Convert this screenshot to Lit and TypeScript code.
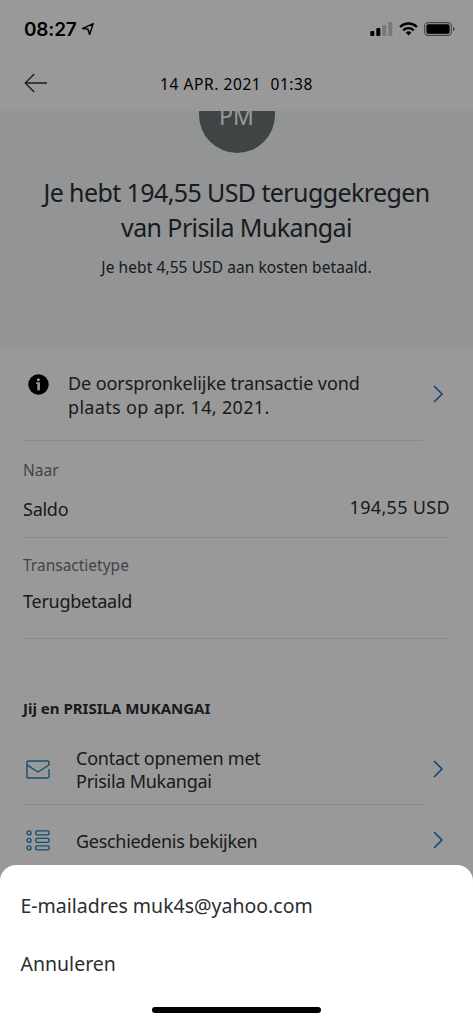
import { LitElement, html, css, svg } from "lit";
import { customElement } from "lit/decorators.js";

const chevron = html`<svg class="chevron" width="12" height="18" viewBox="0 0 12 18">
  <path d="M2 1 L10 9 L2 17" fill="none" stroke="#1b6fc4" stroke-width="1.5" />
</svg>`;

const listRow = (y: number) => svg`
  <circle cx="3" cy=${y} r="2" />
  <rect x="9.7" y=${y - 2} width="13.4" height="4" rx="1.3" />`;

@customElement("app-root")
export class AppRoot extends LitElement {
  static styles = css`
    :host {
      display: block;
      position: relative;
      width: 473px;
      height: 1024px;
      overflow: hidden;
      background: #fff;
      color: #2c2e2f;
      font-family: "Noto Sans", "Open Sans", sans-serif;
      white-space: nowrap;
    }
    * { box-sizing: border-box; }
    svg { display: block; flex: none; }
    .status {
      height: 58px;
      padding: 0 18px 0 24px;
      display: flex;
      align-items: center;
      color: #000;
    }
    .clock {
      font: 600 19px/24px Inter, sans-serif;
      letter-spacing: -0.2px;
      width: 57px;
      padding-top: 1px;
    }
    .signals { margin-left: auto; display: flex; align-items: center; gap: 6px; }
    .nav {
      height: 53px;
      display: grid;
      grid-template-columns: 1fr auto 1fr;
      align-items: center;
      padding: 0 24px 3px;
      color: #000;
    }
    .date {
      font-size: 15.5px;
      line-height: 20px;
      letter-spacing: 0.57px;
      white-space: pre;
      padding-top: 2px;
    }
    .hero {
      height: 236px;
      background: #f4f7fa;
      display: flex;
      flex-direction: column;
      align-items: center;
      overflow: hidden;
      text-align: center;
    }
    .avatar {
      width: 76px;
      height: 76px;
      margin-top: -34px;
      flex: none;
      border-radius: 50%;
      background: #697273;
      color: #fff;
      font-size: 23px;
      line-height: 78px;
    }
    h1 {
      margin: 22px 0 0;
      font-weight: 400;
      font-size: 25px;
      line-height: 35px;
      letter-spacing: -0.6px;
    }
    .fee { margin: 11px 0 0; font-size: 15.5px; line-height: 22px; letter-spacing: 0.08px; }
    .notice {
      height: 93px;
      margin-left: 23px;
      padding-right: 29px;
      display: flex;
      align-items: center;
    }
    .notice .text { letter-spacing: -0.08px; padding-top: 4px; }
    .notice .text .when { letter-spacing: 0.33px; }
    .line { height: 1px; margin: 0 23px; background: #e6e6e8; }
    .line.short { margin-right: 50px; }
    .body { font-size: 18px; line-height: 23.5px; letter-spacing: -0.25px; }
    .notice .icon { width: 45px; padding-left: 4.5px; align-self: flex-start; padding-top: 27px; }
    .chevron { margin-left: auto; }
    .field { padding: 0 23px; display: flex; flex-direction: column; }
    .to { height: 96px; padding-top: 18px; gap: 17px; }
    .type { height: 100px; padding-top: 16px; gap: 14px; }
    .label { font-size: 15.5px; line-height: 22px; color: #6c7378; }
    .pair { display: flex; justify-content: space-between; }
    .amount { line-height: 18.5px; letter-spacing: 0.33px; }
    h2 { margin: 58px 23px 0; font-size: 15px; line-height: 22px; font-weight: 700; }
    .action {
      padding: 0 29px 0 26px;
      display: flex;
      align-items: center;
    }
    .action .icon { width: 50px; }
    .contact { height: 85px; padding-top: 15px; }
    .contact .text { padding-top: 2px; }
    .history { height: 70px; }
    .history .text { letter-spacing: -0.3px; padding-top: 3px; }
    .scrim { position: absolute; inset: 0; background: rgba(0, 0, 0, 0.4); }
    .sheet {
      position: absolute;
      left: 0;
      right: 0;
      bottom: 0;
      height: 159px;
      border-radius: 16px 16px 0 0;
      background: #fff;
      padding: 12px 20.5px 0;
      font-size: 19.5px;
      line-height: 58px;
      display: flex;
      flex-direction: column;
    }
    .home {
      width: 169px;
      height: 6px;
      margin: 14px auto 0;
      border-radius: 3px;
      background: #000;
    }
  `;

  render() {
    return html`
      <div class="status">
        <span class="clock">08:27</span>
        <svg width="14" height="14" viewBox="0 0 14 14">
          <path d="M1.6 6.6 L12.2 1.6 L8.6 12.4 L6.8 7 Z" fill="none" stroke="#000" stroke-width="1.5" stroke-linejoin="round" />
        </svg>
        <div class="signals">
          <svg width="23" height="14" viewBox="0 0 23 14">
            <rect x="0.3" y="9" width="4" height="5" rx="1" />
            <rect x="6.3" y="6" width="4" height="8" rx="1" />
            <rect x="12.3" y="3" width="4" height="11" rx="1" fill="#c8c8c8" />
            <rect x="18.3" y="0" width="4" height="14" rx="1" fill="#c8c8c8" />
          </svg>
          <svg width="19" height="14" viewBox="0 0 19 14">
            <g fill="none" stroke="#000" stroke-width="2.4">
              <path d="M1.1 5 A12 12 0 0 1 17.9 5" />
              <path d="M4.2 8.3 A7.6 7.6 0 0 1 14.8 8.3" />
            </g>
            <path d="M6.6 10.6 A4.2 4.2 0 0 1 12.4 10.6 L9.5 13.6 Z" />
          </svg>
          <svg width="31" height="14" viewBox="0 0 31 14">
            <rect x="0.6" y="0.6" width="26.8" height="12.8" rx="3.6" fill="none" stroke="#777" stroke-width="1.1" />
            <rect x="2.4" y="2.2" width="23.2" height="9.6" rx="1.8" />
            <path d="M29 4.8 Q30.8 5.5 30.8 7 Q30.8 8.5 29 9.2 Z" fill="#777" />
          </svg>
        </div>
      </div>
      <div class="nav">
        <svg width="24" height="20" viewBox="0 0 24 20">
          <path d="M23 10 H1.2 M10.2 1 L1.2 10 L10.2 19" fill="none" stroke="#2c2e2f" stroke-width="1.3" />
        </svg>
        <span class="date">14 APR. 2021  01:38</span>
      </div>
      <section class="hero">
        <div class="avatar">PM</div>
        <h1>Je hebt 194,55 USD teruggekregen<br />van Prisila Mukangai</h1>
        <p class="fee">Je hebt 4,55 USD aan kosten betaald.</p>
      </section>
      <div class="notice body">
        <div class="icon">
          <svg width="21" height="21" viewBox="0 0 21 21">
            <circle cx="10.5" cy="10.5" r="10.2" />
            <circle cx="10.4" cy="5.7" r="1.5" fill="#fff" />
            <path d="M8.2 8.3 H11.9 V16.2 H9.3 V10 H8.2 Z" fill="#fff" />
          </svg>
        </div>
        <div class="text">De oorspronkelijke transactie vond<br /><span class="when">plaats op apr. 14, 2021.</span></div>
        ${chevron}
      </div>
      <div class="line short"></div>
      <div class="field to">
        <span class="label">Naar</span>
        <div class="pair body"><span>Saldo</span><span class="amount">194,55 USD</span></div>
      </div>
      <div class="line"></div>
      <div class="field type">
        <span class="label">Transactietype</span>
        <span class="body">Terugbetaald</span>
      </div>
      <div class="line"></div>
      <h2>Jij en PRISILA MUKANGAI</h2>
      <div class="action contact body">
        <div class="icon">
          <svg width="24" height="19" viewBox="0 0 24 19">
            <path d="M23 9 V16.6 Q23 18 21.6 18 H2.4 Q1 18 1 16.6 V2.4 Q1 1 2.4 1 H21.6 Q23 1 23 2.4 V5 L12 12 L1.6 5.4" fill="none" stroke="#2186b8" stroke-width="1.4" stroke-linejoin="round" />
          </svg>
        </div>
        <div class="text">Contact opnemen met<br />Prisila Mukangai</div>
        ${chevron}
      </div>
      <div class="line short"></div>
      <div class="action history body">
        <div class="icon">
          <svg width="24" height="21" viewBox="0 0 24 21">
            <g fill="none" stroke="#2186b8" stroke-width="1.4">${[2.9, 10.4, 17.9].map(listRow)}</g>
          </svg>
        </div>
        <div class="text">Geschiedenis bekijken</div>
        ${chevron}
      </div>
      <div class="scrim"></div>
      <div class="sheet">
        <span>E-mailadres muk4s@yahoo.com</span>
        <span>Annuleren</span>
        <div class="home"></div>
      </div>
    `;
  }
}
